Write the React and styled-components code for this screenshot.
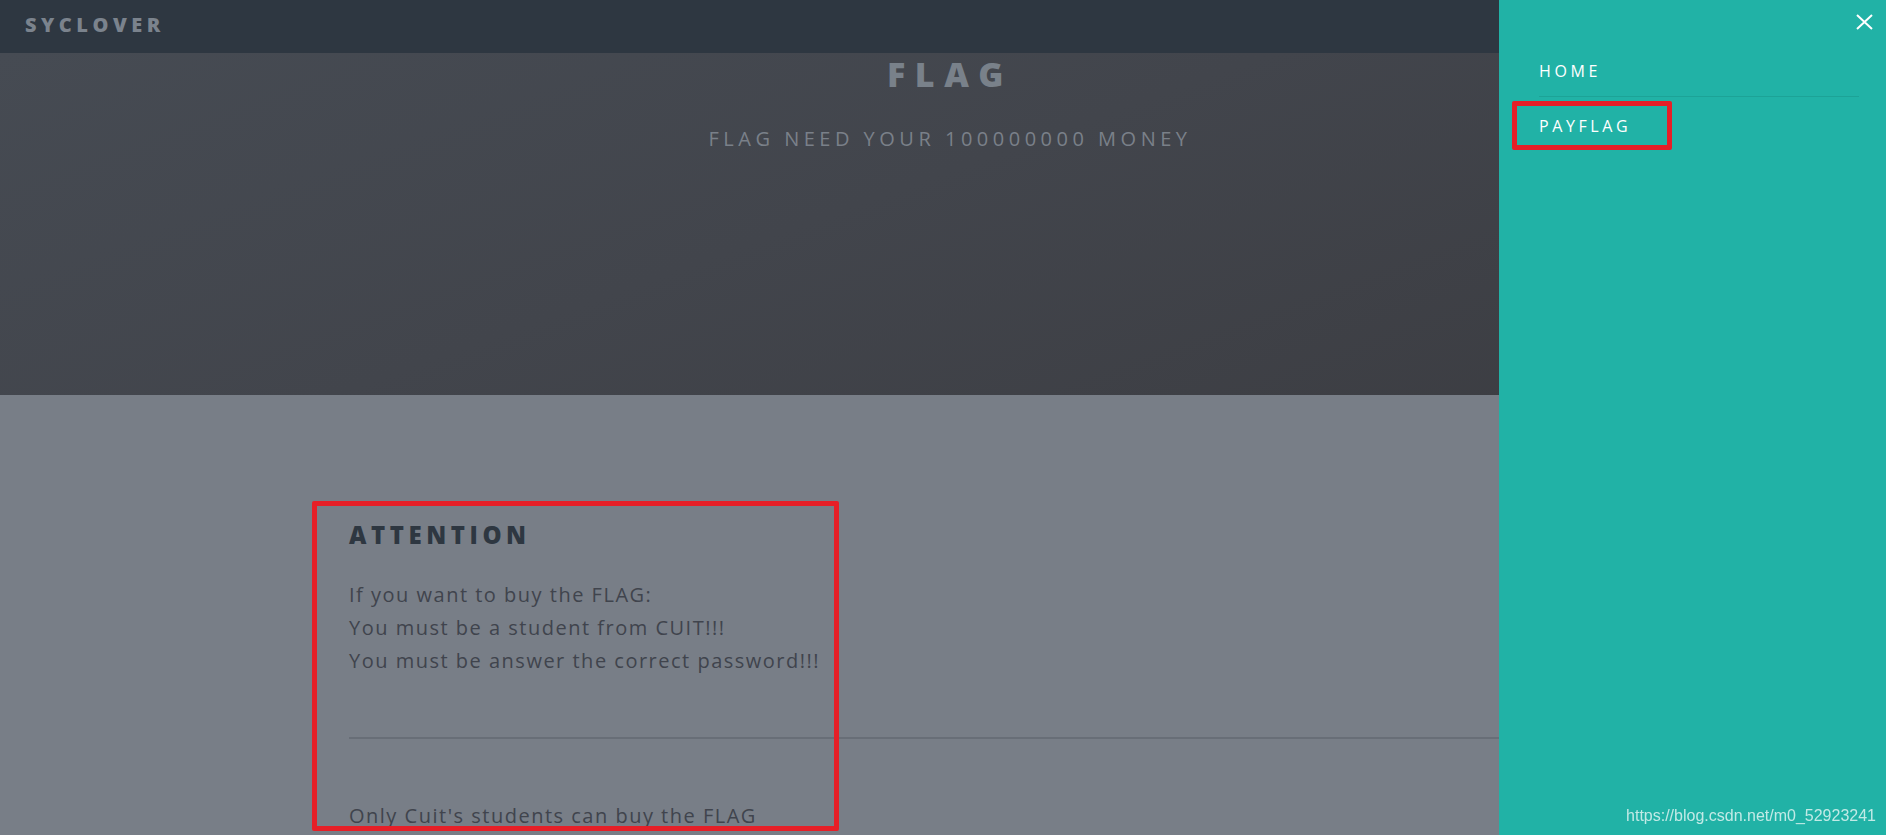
import React from "react";
import styled, { createGlobalStyle } from "styled-components";

const GlobalStyle = createGlobalStyle`
  html, body {
    margin: 0;
    padding: 0;
    height: 835px;
    overflow: hidden;
    background: #787e87;
  }
  body {
    font-family: "Open Sans", "Noto Sans", sans-serif;
  }
  * { box-sizing: border-box; }
`;

const Page = styled.div`
  width: 1886px;
  height: 835px;
  display: flex;
  flex-direction: column;
  overflow: hidden;
`;

const Header = styled.header`
  height: 53px;
  flex: 0 0 53px;
  background: #2e3741;
  display: flex;
  align-items: flex-start;
  padding-left: 25px;
`;

const Logo = styled.h1`
  margin: 0;
  font-size: 20px;
  line-height: 49px;
  font-weight: 800;
  letter-spacing: 0.225em;
  text-transform: uppercase;
  color: #7b838d;
`;

const Banner = styled.section`
  height: 342px;
  flex: 0 0 342px;
  background: linear-gradient(160deg, #464b53 0%, #42454c 45%, #3b3c41 100%);
  display: flex;
  flex-direction: column;
  align-items: center;
  padding-left: 14px;
`;

const BannerTitle = styled.h2`
  margin: 0;
  font-size: 34px;
  line-height: 42px;
  font-weight: 800;
  letter-spacing: 0.28em;
  text-transform: uppercase;
  color: #79818a;
`;

const BannerText = styled.p`
  margin: 27px 0 0;
  font-size: 20px;
  line-height: 33px;
  font-weight: 400;
  letter-spacing: 0.225em;
  text-transform: uppercase;
  color: #7a8089;
`;

const Main = styled.section`
  flex: 1;
  background: #787e87;
  padding: 122px 349px 0 349px;
`;

const Inner = styled.div`
  position: relative;
`;

const SectionTitle = styled.h2`
  margin: 0;
  font-size: 24px;
  line-height: 36px;
  font-weight: 800;
  letter-spacing: 0.19em;
  text-transform: uppercase;
  color: #2e3741;
`;

const Paragraph = styled.p`
  margin: ${(p) => p.$mt || 0}px 0 0;
  font-size: 20px;
  line-height: 33px;
  font-weight: 400;
  letter-spacing: 0.075em;
  color: #40444d;
`;

const Rule = styled.hr`
  margin: 60px 0;
  border: 0;
  border-top: 2px solid #686e77;
  height: 0;
`;

const Annotation = styled.div`
  position: absolute;
  left: ${(p) => p.$left}px;
  top: ${(p) => p.$top}px;
  width: ${(p) => p.$w}px;
  height: ${(p) => p.$h}px;
  border: 5px solid #e61f27;
  border-radius: 2px;
  pointer-events: none;
`;

const Menu = styled.nav`
  position: fixed;
  top: 0;
  right: 0;
  width: 387px;
  height: 835px;
  background: #21b2a6;
  padding: 0 27px 0 40px;
`;

const CloseButton = styled.button`
  position: absolute;
  top: 12px;
  right: 12px;
  width: 20px;
  height: 20px;
  padding: 0;
  border: 0;
  background: none;
  display: flex;
  align-items: center;
  justify-content: center;
`;

const MenuList = styled.ul`
  list-style: none;
  margin: 0;
  padding: 51px 0 0;
`;

const MenuItem = styled.li`
  position: relative;
  & + & {
    border-top: 1px solid #1ca397;
    margin-top: 5px;
    padding-top: 9px;
  }
`;

const MenuLink = styled.a`
  display: block;
  font-size: 16px;
  line-height: 40px;
  font-weight: 400;
  letter-spacing: 0.225em;
  text-transform: uppercase;
  color: #ffffff;
  text-decoration: none;
`;

const Watermark = styled.div`
  position: fixed;
  right: 10px;
  bottom: 10px;
  font-family: "Liberation Sans", Arial, sans-serif;
  font-size: 16px;
  line-height: 18px;
  color: rgba(255, 255, 255, 0.72);
`;

export default function App() {
  return (
    <>
      <GlobalStyle />
      <Page>
        <Header>
          <Logo>Syclover</Logo>
        </Header>
        <Banner>
          <BannerTitle>FLAG</BannerTitle>
          <BannerText>FLAG NEED YOUR 100000000 MONEY</BannerText>
        </Banner>
        <Main>
          <Inner>
            <SectionTitle>Attention</SectionTitle>
            <Paragraph $mt={25}>
              If you want to buy the FLAG:
              <br />
              You must be a student from CUIT!!!
              <br />
              You must be answer the correct password!!!
            </Paragraph>
            <Rule />
            <Paragraph>Only Cuit's students can buy the FLAG</Paragraph>
            <Annotation $left={-37} $top={-16} $w={527} $h={330} />
          </Inner>
        </Main>
      </Page>
      <Menu>
        <CloseButton aria-label="Close">
          <svg width="17" height="16" viewBox="0 0 17 16">
            <path d="M1 1 L16 15 M16 1 L1 15" stroke="#ffffff" strokeWidth="2" fill="none" />
          </svg>
        </CloseButton>
        <MenuList>
          <MenuItem>
            <MenuLink href="#">Home</MenuLink>
          </MenuItem>
          <MenuItem>
            <MenuLink href="#">Payflag</MenuLink>
            <Annotation $left={-27} $top={4} $w={160} $h={49} />
          </MenuItem>
        </MenuList>
      </Menu>
      <Watermark>https://blog.csdn.net/m0_52923241</Watermark>
    </>
  );
}
